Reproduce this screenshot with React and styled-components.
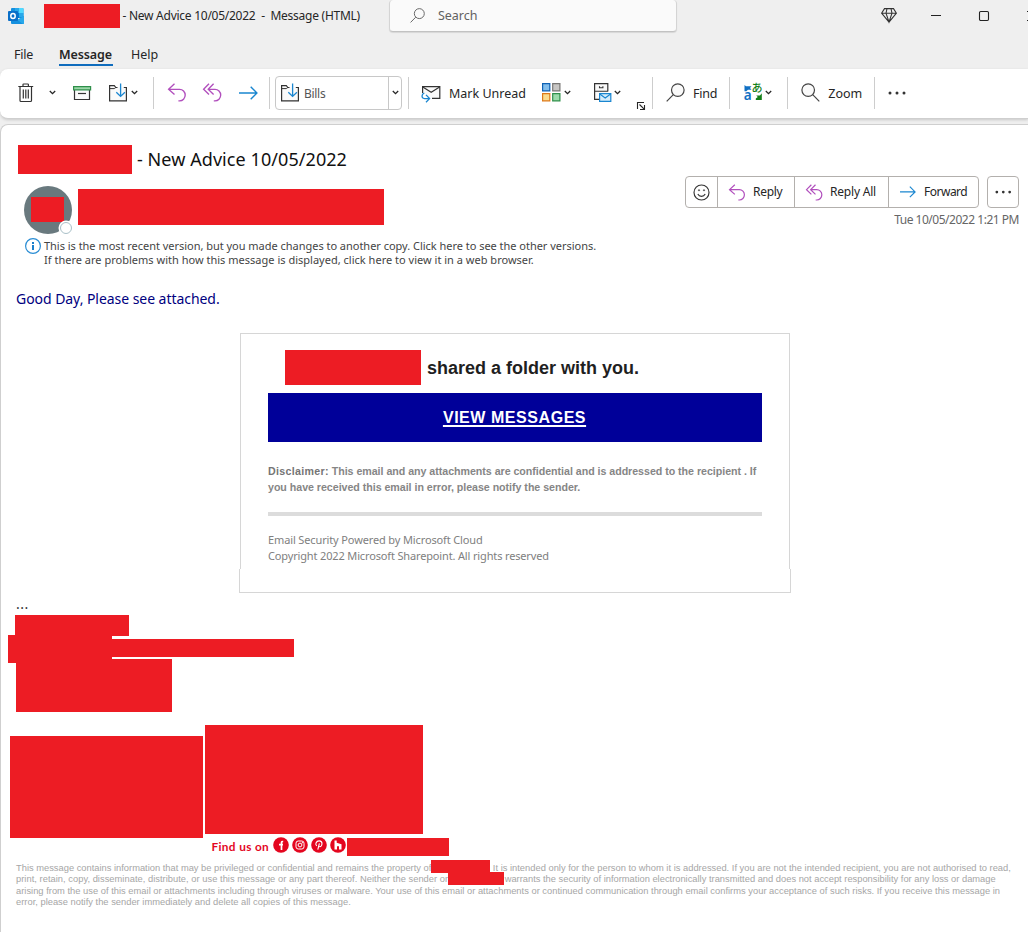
import React from 'react';
import styled, { createGlobalStyle } from 'styled-components';

const RED = '#ed1c24';
const UI = '"Noto Sans", "Open Sans", sans-serif';
const ARIAL = '"Liberation Sans", Arial, sans-serif';

const Global = createGlobalStyle`
  *, *::before, *::after { box-sizing: border-box; }
  body { margin: 0; background: #f0f0f0; font-family: ${UI}; overflow: hidden; }
`;

const Window = styled.div`
  width: 1028px;
  height: 932px;
  display: flex;
  flex-direction: column;
  background: #efefef;
  overflow: hidden;
`;

const Label = styled.span`
  flex: none;
  font-family: ${(p) => p.$font || UI};
  font-size: ${(p) => p.$size || 12}px;
  font-weight: ${(p) => p.$weight || 400};
  letter-spacing: ${(p) => p.$ls || 0}px;
  color: ${(p) => p.$color || '#262626'};
  line-height: ${(p) => p.$lh || 16}px;
  margin-left: ${(p) => p.$ml || 0}px;
  margin-top: ${(p) => p.$mt || 0}px;
  white-space: pre;
`;

const Redaction = styled.div`
  flex: none;
  width: ${(p) => p.$w}px;
  height: ${(p) => p.$h}px;
  margin: ${(p) => p.$m || 0};
  background: ${RED};
`;

const Glyph = styled.svg`
  flex: none;
  display: block;
  margin-left: ${(p) => p.$ml || 0}px;
  margin-top: ${(p) => p.$mt || 0}px;
  fill: none;
  overflow: visible;
`;

/* Title bar */
const TitleBar = styled.header`
  flex: none;
  display: flex;
  align-items: center;
  height: 32px;
  padding: 0 0 1px 8px;
`;

const SearchBox = styled.div`
  flex: none;
  align-self: flex-start;
  display: flex;
  align-items: center;
  width: 288px;
  height: 32px;
  margin-left: 29px;
  padding: 0 0 1px 20px;
  background: #fafafa;
  border: 1px solid #d4d4d4;
  border-top: 0;
  border-bottom-color: #c2c2c2;
  border-radius: 4px;
  box-shadow: 0 1px 1px rgba(0, 0, 0, 0.1);
`;

/* Menu tabs */
const Tabs = styled.nav`
  flex: none;
  display: flex;
  height: 37px;
  padding: 14px 0 0 14px;
`;

const Tab = styled.div`
  display: flex;
  flex-direction: column;
  width: ${(p) => p.$w}px;
  height: 20px;
  margin-right: ${(p) => p.$gap || 0}px;
  border-bottom: 2px solid ${(p) => (p.$active ? '#0f6cbd' : 'transparent')};
`;

/* Ribbon */
const Ribbon = styled.div`
  flex: none;
  display: flex;
  align-items: center;
  height: 50px;
  padding: 0 0 2px 18px;
  background: #fff;
  border-radius: 8px 0 0 8px;
  border-bottom: 1px solid #cfcfcf;
  box-shadow: 0 1px 3px rgba(0, 0, 0, 0.16);
`;

const Divider = styled.i`
  flex: none;
  width: 1px;
  height: 32px;
  margin-left: ${(p) => p.$ml}px;
  background: #cdcdcd;
`;

const Combo = styled.div`
  flex: none;
  display: flex;
  align-items: center;
  width: 127px;
  height: 34px;
  margin-left: 5px;
  padding-left: 5px;
  border: 1px solid #c8c8c8;
  border-radius: 4px;
`;

const ComboArrow = styled.div`
  display: flex;
  align-items: center;
  width: 13px;
  height: 32px;
  margin-left: auto;
  padding-left: 3px;
  border-left: 1px solid #c8c8c8;
`;

/* Message pane */
const Pane = styled.main`
  flex: 1;
  display: flex;
  flex-direction: column;
  min-height: 0;
  margin-top: 5px;
  background: #fff;
  border-left: 1px solid #cfcfcf;
  border-top: 1px solid #cfcfcf;
  border-top-left-radius: 8px;
`;

const SubjectRow = styled.div`
  flex: none;
  display: flex;
  align-items: center;
  height: 29px;
  margin: 20px 0 0 17px;
`;

const SenderRow = styled.div`
  flex: none;
  display: flex;
  height: 64px;
  padding-left: 23px;
`;

const Avatar = styled.div`
  position: relative;
  flex: none;
  width: 48px;
  height: 48px;
  margin-top: 12px;
  padding: 11px 0 0 7px;
  border-radius: 50%;
  background: #69797e;
`;

const Presence = styled.i`
  position: absolute;
  right: 0;
  bottom: 0;
  width: 12px;
  height: 12px;
  border-radius: 50%;
  background: #fff;
  border: 1px solid #a9c0c8;
  box-shadow: 0 0 0 1.5px #fff;
`;

const Actions = styled.div`
  display: flex;
  flex-direction: column;
  align-items: flex-end;
  margin: 2px 9px 0 auto;
`;

const ActionRow = styled.div`
  display: flex;
  gap: 8px;
`;

const ButtonGroup = styled.div`
  display: flex;
  height: 32px;
  border: 1px solid #b3b0ad;
  border-radius: 4px;
`;

const ActionButton = styled.div`
  display: flex;
  align-items: center;
  width: ${(p) => p.$w}px;
  padding-left: ${(p) => p.$pl || 0}px;
  & + & { border-left: 1px solid #b3b0ad; }
`;

const InfoBar = styled.div`
  flex: none;
  display: flex;
  height: 30px;
  padding-left: 24px;
`;

const InfoLines = styled.div`
  display: flex;
  flex-direction: column;
  margin: 1px 0 0 2px;
`;

const Greeting = styled.div`
  flex: none;
  display: flex;
  height: 65px;
  padding: 22px 0 0 15px;
`;

/* Shared-folder card */
const Card = styled.section`
  flex: none;
  width: 552px;
  height: 260px;
  margin-left: 238px;
  display: flex;
  flex-direction: column;
`;

const CardBody = styled.div`
  height: 236px;
  margin: 0 1px;
  padding: 16px 27px 0;
  border: 1px solid #d6d6d6;
  border-bottom: 0;
  display: flex;
  flex-direction: column;
`;

const CardFoot = styled.div`
  height: 24px;
  border: 1px solid #d6d6d6;
  border-top: 0;
`;

const CardTitle = styled.div`
  display: flex;
  align-items: center;
  padding-left: 17px;
`;

const ViewButton = styled.a`
  display: flex;
  flex: none;
  align-items: center;
  justify-content: center;
  height: 49px;
  margin-top: 8px;
  padding-right: 1px;
  background: #000099;
  color: #fff;
  font: 700 16px/20px ${ARIAL};
  letter-spacing: 0.55px;
  text-decoration: underline;
  text-decoration-thickness: 2px;
  text-underline-offset: 2px;
`;

const Lines = styled.div`
  flex: none;
  display: flex;
  flex-direction: column;
  margin-top: ${(p) => p.$mt}px;
`;

const Rule = styled.div`
  flex: none;
  height: 4px;
  margin-top: 17px;
  background: #dcdcdc;
`;

/* Signature */
const Signature = styled.div`
  flex: none;
  display: flex;
  flex-direction: column;
`;

const Row = styled.div`
  display: flex;
  align-items: flex-start;
`;

const FindRow = styled.div`
  display: flex;
  height: 23px;
  padding-left: 210px;
`;

const Legal = styled.div`
  display: flex;
  flex-direction: column;
  margin-left: 15px;
`;

const LegalLine = styled.div`
  display: flex;
  height: ${(p) => p.$h || 11}px;
`;

const Chevron = ({ ml }) => (
  <Glyph $ml={ml} width="7" height="5" viewBox="0 0 7 5">
    <path d="M.8 1 3.5 3.7 6.2 1" stroke="#262626" strokeWidth="1.3" />
  </Glyph>
);

const Trash = () => (
  <Glyph width="16" height="20" viewBox="0 0 16 20" stroke="#333" strokeWidth="1.2">
    <path d="M.3 3.5h14.9M5 3.3V1.6Q5 1 5.6 1h4.2q.6 0 .6.6v1.7M2 3.5v14q0 1 1 1h9.5q1 0 1-1v-14M5.3 6.5v9M7.8 6.5v9M10.3 6.5v9" />
  </Glyph>
);

const Archive = ({ ml }) => (
  <Glyph $ml={ml} width="19" height="16" viewBox="0 0 19 16">
    <path d="M1.5 5v9.5h15V5" fill="#fafafa" stroke="#333" strokeWidth="1.2" />
    <path d="M.6 1.6h17v3.2H.6z" fill="#9bd7a8" stroke="#2f8f4a" strokeWidth="1.2" />
    <path d="M5 8.5h8" stroke="#333" strokeWidth="1.2" />
  </Glyph>
);

const MoveFolder = ({ ml }) => (
  <Glyph $ml={ml} width="19" height="19" viewBox="0 0 19 19">
    <path d="M8.5 4.5H6.8L5.3 2.6H.6v15.2h16.8V4.5h-2.6" fill="#fafafa" stroke="#333" strokeWidth="1.2" />
    <path d="M.6 5.6h4.7l1.5-1.1" stroke="#333" strokeWidth="1" />
    <path d="M11.6.5v12.7M7.3 9.2l4.3 4.2 4.3-4.2" stroke="#1a86d0" strokeWidth="1.3" />
  </Glyph>
);

const Undo = ({ ml, size = 19 }) => (
  <Glyph $ml={ml} width={size} height={size} viewBox="0 0 19 19" stroke="#b14fbd" strokeWidth="1.35">
    <path d="M6.5.8.6 6.3l5.9 5.3M.6 6.3h11a5.6 5.8 0 0 1 0 11.6h-1.2" />
  </Glyph>
);

const ReplyAllIcon = ({ ml, size = 19 }) => (
  <Glyph $ml={ml} width={size} height={size} viewBox="0 0 19 19" stroke="#b14fbd" strokeWidth="1.35">
    <path d="M6 .8.6 6.3 6 11.6M10.6.8 5.2 6.3l5.4 5.3M5.2 6.3h6.8a5.7 5.8 0 0 1 0 11.6h-1.2" />
  </Glyph>
);

const ForwardIcon = ({ ml, w = 19 }) => (
  <Glyph $ml={ml} width={w} height={(w * 14) / 19} viewBox="0 0 19 14" stroke="#1a86d0" strokeWidth="1.4">
    <path d="M0 7h17.5M11.7.8 17.9 7l-6.2 6.2" />
  </Glyph>
);

const Magnifier = ({ ml, size, color, flip }) => (
  <Glyph $ml={ml} width={size} height={size} viewBox="0 0 19 19" stroke={color} strokeWidth="1.2">
    <g transform={flip ? 'translate(19 0) scale(-1 1)' : undefined}>
      <circle cx="11.8" cy="7.1" r="6.3" fill="#fafafa" />
      <path d="M7.3 11.6.7 18.3" />
    </g>
  </Glyph>
);

const Dots = ({ ml, size = 18 }) => (
  <Glyph $ml={ml} width={size} height="4" viewBox="0 0 18 4">
    <g fill="#333">
      <circle cx="2" cy="2" r="1.5" />
      <circle cx="9" cy="2" r="1.5" />
      <circle cx="16" cy="2" r="1.5" />
    </g>
  </Glyph>
);

const Outlook = () => (
  <Glyph width="16" height="16" viewBox="0 0 16 16">
    <path d="M3 1q0-1 1-1h10.5q1 0 1 1v9H3z" fill="#1490df" />
    <path d="M7 0h4v5H7z" fill="#28a8ea" />
    <path d="M11 0h3.5q1 0 1 1v4H11z" fill="#50d9ff" />
    <path d="M7 5h4v5H7z" fill="#0078d4" />
    <path d="M11 5h4.5v4H11z" fill="#28a8ea" />
    <path d="M3 9l6.5 3L16 8v7q0 1-1 1H4q-1 0-1-1z" fill="#1490df" />
    <path d="M16 8v7q0 1-1 1L9.5 12z" fill="#28a8ea" />
    <rect y="3" width="10" height="10" rx="1" fill="#0a6fc8" />
    <ellipse cx="5" cy="8" rx="2.2" ry="2.5" stroke="#fff" strokeWidth="1.5" />
  </Glyph>
);

const Diamond = ({ ml }) => (
  <Glyph $ml={ml} width="16" height="15" viewBox="0 0 16 15" stroke="#333" strokeWidth="1.05">
    <path d="M3.5.6h9L15.4 5.2 8 14.2.6 5.2zM.6 5.2h14.8M6 .6 5 5.2l3 8.8 3-8.8L10 .6" />
  </Glyph>
);

const MarkUnread = () => (
  <Glyph $ml={12} $mt={2} width="20" height="18" viewBox="0 0 20 18">
    <path d="M1.6 8V1.6h17.2v11.8H11" fill="#fafafa" stroke="#333" strokeWidth="1.2" />
    <path d="M1.8 2 10.2 7.3 18.6 2" stroke="#333" strokeWidth="1.1" />
    <path d="M3.3 8.2C.4 9 .1 13.4 3.5 13.6H8M5 9.9l3.6 3.7L5 17.3" stroke="#1a86d0" strokeWidth="1.3" />
  </Glyph>
);

const Categories = () => (
  <Glyph $ml={16} width="19" height="19" viewBox="0 0 19 19" strokeWidth="1.2">
    <path d="M.6.6h7.2v7.2H.6z" fill="#83beec" stroke="#0f62b5" />
    <path d="M10.7.6h7.2v7.2h-7.2z" fill="#c8c6c4" stroke="#797775" />
    <path d="M.6 10.6h7.2v7.2H.6z" fill="#fbdc8d" stroke="#dd7a1a" />
    <path d="M10.7 10.6h7.2v7.2h-7.2z" fill="#9bdbaa" stroke="#2f8f4a" />
  </Glyph>
);

const Cabinet = () => (
  <Glyph $ml={23} width="18" height="19" viewBox="0 0 18 19">
    <path d="M5 16.4H.6V.6h13.2v8" fill="#fafafa" stroke="#333" strokeWidth="1.2" />
    <path d="M.6 8.3H13.8M5.5 3.2v1.6h3.4V3.2" stroke="#333" strokeWidth="1.1" />
    <path d="M5.6 10.6h11.2v7.8H5.6z" fill="#d5ecfb" stroke="#1a86d0" strokeWidth="1.2" />
    <path d="m5.8 11 5.4 4 5.4-4" stroke="#1a86d0" strokeWidth="1.1" />
  </Glyph>
);

const Launcher = () => (
  <Glyph $ml={16} $mt={26} width="8" height="8" viewBox="0 0 8 8" stroke="#262626">
    <path d="M.5 7V.5H7M2.5 2.5l4.7 4.7M7.5 3v4.5H3" strokeWidth="1.1" />
  </Glyph>
);

const Translate = () => (
  <Glyph $ml={13.5} width="18" height="19" viewBox="0 0 18 19">
    <path d="M.5 2l1.5 1.3H7.5L6 5l1.5 1.7H4L2.3 8.2H.5z" fill="#1070c4" />
    <path d="M17.8 10.2V17h-6v-1.5l2-1.5-1.6-1.5H16z" fill="#128018" />
    <text x="-.3" y="17" fontFamily="Noto Sans" fontWeight="600" fontSize="13.5" fill="#1070c4">a</text>
    <text x="7.5" y="9.3" fontFamily="Noto Sans CJK JP" fontWeight="500" fontSize="11" fill="#128018">あ</text>
  </Glyph>
);

const Smiley = () => (
  <Glyph width="17" height="17" viewBox="0 0 17 17" stroke="#333" strokeWidth="1.15">
    <circle cx="8.5" cy="8.5" r="7.5" />
    <path d="M4.8 10q1.2 2.3 3.7 2.3t3.7-2.3" />
    <circle cx="6" cy="6.3" r=".7" fill="#333" strokeWidth=".4" />
    <circle cx="11" cy="6.3" r=".7" fill="#333" strokeWidth=".4" />
  </Glyph>
);

const Info = () => (
  <Glyph width="16" height="16" viewBox="0 0 16 16">
    <circle cx="8" cy="8" r="7.4" stroke="#2a8dd4" strokeWidth="1.2" />
    <path d="M8 7v5M8 4v2" stroke="#1a7fcc" strokeWidth="2" />
  </Glyph>
);

const Social = ({ ml, children }) => (
  <Glyph $ml={ml} $mt={-1} width="16" height="16" viewBox="0 0 16 16">
    <circle cx="8" cy="8" r="7.8" fill="#e4061f" />
    {children}
  </Glyph>
);

const INFO = [
  ['This is the most recent version, but you made changes to another copy. Click here to see the other versions.', -0.025],
  ['If there are problems with how this message is displayed, click here to view it in a web browser.', 0.012],
];

const LegalText = ({ children, ls, ml }) => (
  <Label $font={ARIAL} $size={9.33} $lh={14.5} $color="#a6a6a6" $ls={ls} $ml={ml}>{children}</Label>
);

export default function App() {
  return (
    <Window>
      <Global />
      <TitleBar>
        <Outlook />
        <Redaction $w={76} $h={24} $m="1px 0 0 20px" />
        <Label $ml={2.5} $ls={-0.26}>{'- New Advice 10/05/2022  -  Message (HTML)'}</Label>
        <SearchBox>
          <Magnifier size={15} color="#616161" />
          <Label $ml={13} $mt={1} $size={12.5} $color="#616161">Search</Label>
        </SearchBox>
        <Diamond ml={204} />
        <Glyph $ml={34} width="10" height="2" viewBox="0 0 10 2">
          <path d="M0 .5h10" stroke="#222" />
        </Glyph>
        <Glyph $ml={38} width="10" height="10" viewBox="0 0 10 10">
          <rect x=".5" y=".5" width="9" height="9" rx="1.2" stroke="#222" strokeWidth="1.1" />
        </Glyph>
        <Glyph $ml={38} width="10" height="10" viewBox="0 0 10 10">
          <path d="m0 0 10 10M10 0 0 10" stroke="#222" />
        </Glyph>
      </TitleBar>

      <Tabs>
        <Tab $w={20} $gap={25}><Label $size={12.5} $ls={-0.2} $lh={18}>File</Label></Tab>
        <Tab $w={54} $gap={18} $active><Label $size={12.5} $weight={600} $ls={-0.1} $lh={18}>Message</Label></Tab>
        <Tab $w={28}><Label $size={12.5} $lh={18}>Help</Label></Tab>
      </Tabs>

      <Ribbon>
        <Trash />
        <Chevron ml={15} />
        <Archive ml={17} />
        <MoveFolder ml={17} />
        <Chevron ml={3} />
        <Divider $ml={15} />
        <Undo ml={14} />
        <ReplyAllIcon ml={16} />
        <ForwardIcon ml={16.5} />
        <Divider $ml={11.5} />
        <Combo>
          <MoveFolder ml={0} />
          <Label $ml={4} $mt={2} $ls={-0.3} $color="#555">Bills</Label>
          <ComboArrow><Chevron /></ComboArrow>
        </Combo>
        <Divider $ml={6} />
        <MarkUnread />
        <Label $ml={8} $mt={2} $size={12.5}>Mark Unread</Label>
        <Categories />
        <Chevron ml={3} />
        <Cabinet />
        <Chevron ml={2} />
        <Launcher />
        <Divider $ml={7} />
        <Magnifier ml={13} size={19} color="#444" />
        <Label $ml={8} $mt={2} $size={12.5} $ls={-0.2}>Find</Label>
        <Divider $ml={12} />
        <Translate />
        <Chevron ml={3.5} />
        <Divider $ml={15} />
        <Magnifier ml={13} size={19} color="#444" flip />
        <Label $ml={8} $mt={2} $size={12.5}>Zoom</Label>
        <Divider $ml={12} />
        <Dots ml={13} />
      </Ribbon>

      <Pane>
        <SubjectRow>
          <Redaction $w={114} $h={29} />
          <Label $ml={5} $mt={-2} $size={18} $ls={0.07} $lh={28} $color="#111">- New Advice 10/05/2022</Label>
        </SubjectRow>
        <SenderRow>
          <Avatar>
            <Redaction $w={33} $h={25} />
            <Presence />
          </Avatar>
          <Redaction $w={306} $h={36} $m="15px 0 0 6px" />
          <Actions>
            <ActionRow>
              <ButtonGroup>
                <ActionButton $w={31} $pl={6.5}><Smiley /></ActionButton>
                <ActionButton $w={77} $pl={11}><Undo size={17} /><Label $ml={7} $ls={-0.3}>Reply</Label></ActionButton>
                <ActionButton $w={94} $pl={11}><ReplyAllIcon size={17} /><Label $ml={7} $ls={-0.2}>Reply All</Label></ActionButton>
                <ActionButton $w={90} $pl={11}><ForwardIcon w={16} /><Label $ml={8} $ls={-0.5}>Forward</Label></ActionButton>
              </ButtonGroup>
              <ButtonGroup>
                <ActionButton $w={30} $pl={6.5}><Dots size={16.5} /></ActionButton>
              </ButtonGroup>
            </ActionRow>
            <Lines $mt={4}><Label $ls={-0.48} $color="#666">Tue 10/05/2022 1:21 PM</Label></Lines>
          </Actions>
        </SenderRow>
        <InfoBar>
          <Info />
          <InfoLines>
            {INFO.map(([text, ls]) => (
              <Label key={text} $ml={1} $size={11} $lh={14} $ls={ls} $color="#444">{text}</Label>
            ))}
          </InfoLines>
        </InfoBar>
        <Greeting>
          <Label $size={14} $lh={18} $ls={-0.05} $color="#000080">Good Day, Please see attached.</Label>
        </Greeting>

        <Card>
          <CardBody>
            <CardTitle>
              <Redaction $w={136} $h={35} />
              <Label $ml={6} $font={ARIAL} $size={18} $weight={700} $lh={24} $color="#1f1f1f">shared a folder with you.</Label>
            </CardTitle>
            <ViewButton>VIEW MESSAGES</ViewButton>
            <Lines $mt={21}>
              <Label $font={ARIAL} $size={10.67} $weight={700} $ls={-0.035} $color="#868686">
                <Label as="b" $font={ARIAL} $size={10.67} $weight={700} $ls={0.3} $color="#757575">Disclaimer:</Label>
                {' This email and any attachments are confidential and is addressed to the recipient . If'}
              </Label>
              <Label $font={ARIAL} $size={10.67} $weight={700} $ls={-0.035} $color="#868686">you have received this email in error, please notify the sender.</Label>
            </Lines>
            <Rule />
            <Lines $mt={16}>
              <Label $size={11} $ls={-0.13} $color="#808080">Email Security Powered by Microsoft Cloud</Label>
              <Label $size={11} $ls={-0.15} $color="#808080">Copyright 2022 Microsoft Sharepoint. All rights reserved</Label>
            </Lines>
          </CardBody>
          <CardFoot />
        </Card>

        <Signature>
          <Label $ml={15} $size={14} $lh={22} $ls={0.5} $color="#333">...</Label>
          <Redaction $w={114} $h={21} $m="0 0 0 14px" />
          <Row>
            <Redaction $w={104} $h={28} $m="-1px 0 0 7px" />
            <Redaction $w={182} $h={18} $m="3px 0 0" />
          </Row>
          <Redaction $w={156} $h={53} $m="-4px 0 0 15px" />
          <Row>
            <Redaction $w={193} $h={102} $m="24px 0 0 9px" />
            <Redaction $w={218} $h={109} $m="13px 0 0 2px" />
          </Row>
          <FindRow>
            <Label $ml={0.5} $font="Lato, sans-serif" $size={11.8} $weight={700} $lh={18} $ls={0.35} $color="#e4061f">Find us on</Label>
            <Social ml={4}>
              <path d="M8.5 13V5.8q0-1.5 1.7-1.3M6 7.7h4" stroke="#fff" strokeWidth="1.7" />
            </Social>
            <Social ml={3}>
              <rect x="4" y="4" width="8" height="8" rx="2.2" stroke="#fff" strokeWidth="1" />
              <circle cx="8" cy="8" r="1.9" stroke="#fff" strokeWidth="1" />
              <circle cx="10.4" cy="5.7" r=".6" fill="#fff" />
            </Social>
            <Social ml={3}>
              <path d="M5.7 9Q4.4 7.5 5 6q.9-2.2 3.3-2.1 2.8.2 2.7 2.8-.3 3-2.3 3-1 0-1.3-.8M8.4 6.3 6.8 12.6" stroke="#fff" strokeWidth="1.1" />
            </Social>
            <Social ml={2.5}>
              <path d="M4.5 3.5h2.2v2.3l4.8 1.4v5.3H9V9.2H7v3.3H4.5z" fill="#fff" />
            </Social>
            <Redaction $w={102} $h={18} $m="0 0 0 1.5px" />
          </FindRow>
          <Legal>
            <LegalLine>
              <LegalText>This message contains information that may be privileged or confidential and remains the property of</LegalText>
              <Redaction $w={59} $h={13} $m="-1px 0 0 0" />
              <LegalText ml={2.5} ls={0.008}>It is intended only for the person to whom it is addressed. If you are not the intended recipient, you are not authorised to read,</LegalText>
            </LegalLine>
            <LegalLine $h={12}>
              <LegalText ls={0.028}>print, retain, copy, disseminate, distribute, or use this message or any part thereof. Neither the sender or</LegalText>
              <Redaction $w={56} $h={13} />
              <LegalText ml={0.5}>warrants the security of information electronically transmitted and does not accept responsibility for any loss or damage</LegalText>
            </LegalLine>
            <LegalLine>
              <LegalText ls={0.013}>arising from the use of this email or attachments including through viruses or malware. Your use of this email or attachments or continued communication through email confirms your acceptance of such risks. If you receive this message in</LegalText>
            </LegalLine>
            <LegalLine>
              <LegalText ls={0.01}>error, please notify the sender immediately and delete all copies of this message.</LegalText>
            </LegalLine>
          </Legal>
        </Signature>
      </Pane>
    </Window>
  );
}
